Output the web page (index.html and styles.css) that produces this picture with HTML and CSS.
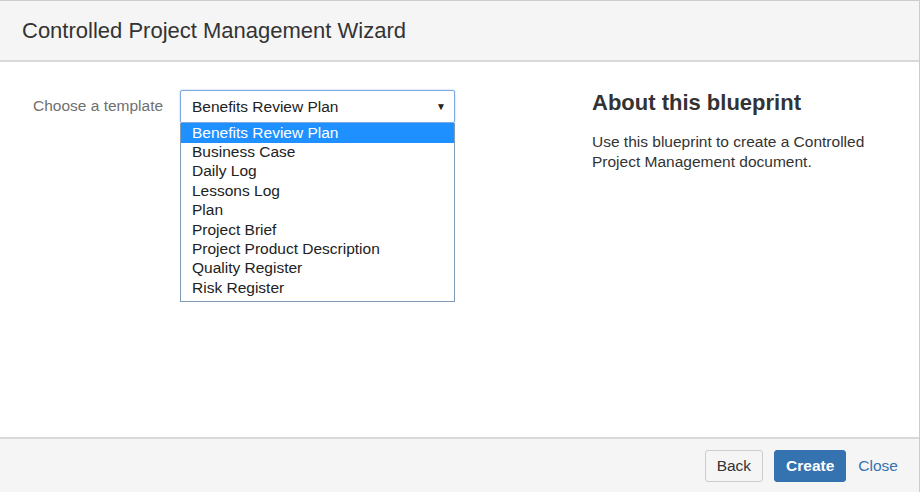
FILE: index.html
```html
<!DOCTYPE html>
<html>
<head>
<meta charset="utf-8">
<link rel="stylesheet" href="styles.css">
</head>
<body>
<div class="dialog">
  <div class="header">
    <h2 class="title">Controlled Project Management Wizard</h2>
  </div>
  <div class="content">
    <div class="form">
      <label class="label">Choose a template</label>
      <div class="select-wrap">
        <div class="select">
          <span>Benefits Review Plan</span>
          <span class="arrow">&#9660;</span>
        </div>
        <ul class="options">
          <li class="selected">Benefits Review Plan</li>
          <li>Business Case</li>
          <li>Daily Log</li>
          <li>Lessons Log</li>
          <li>Plan</li>
          <li>Project Brief</li>
          <li>Project Product Description</li>
          <li>Quality Register</li>
          <li>Risk Register</li>
        </ul>
      </div>
    </div>
    <div class="about">
      <h3>About this blueprint</h3>
      <p>Use this blueprint to create a Controlled Project Management document.</p>
    </div>
  </div>
  <div class="footer">
    <button class="btn">Back</button>
    <button class="btn primary">Create</button>
    <a class="link" href="#">Close</a>
  </div>
</div>
</body>
</html>
```
FILE: styles.css
```css
html, body {
  margin: 0;
  padding: 0;
  background: #fff;
}
body {
  font-family: "Liberation Sans", Arial, sans-serif;
  color: #333;
  width: 920px;
  height: 492px;
  overflow: hidden;
}
.dialog {
  display: flex;
  flex-direction: column;
  height: 492px;
  border-top: 1px solid #cccccc;
  border-right: 1px solid #cccccc;
  box-sizing: border-box;
}
.header {
  background: #f5f5f5;
  border-bottom: 2px solid #d9d9d9;
  height: 59px;
  display: flex;
  align-items: center;
  padding-left: 22px;
}
.title {
  margin: 0;
  font-size: 22px;
  font-weight: normal;
  color: #333;
}
.content {
  flex: 1;
  display: flex;
  padding: 28px 0 0 33px;
}
.form {
  display: flex;
  width: 559px;
}
.label {
  font-size: 15.5px;
  color: #707070;
  width: 147px;
  padding-top: 7px;
}
.select-wrap {
  position: relative;
  width: 275px;
}
.select {
  height: 33px;
  box-sizing: border-box;
  border: 1px solid #7fa8e0;
  border-radius: 2px;
  box-shadow: 0 0 2px rgba(102, 150, 233, 0.6);
  display: flex;
  align-items: center;
  justify-content: space-between;
  padding: 0 8px 0 11px;
  font-size: 15.5px;
  color: #222;
}
.arrow {
  font-size: 10px;
  color: #222;
}
.options {
  position: absolute;
  top: 33px;
  left: 0;
  width: 275px;
  box-sizing: border-box;
  margin: 0;
  padding: 0 0 3px 0;
  list-style: none;
  border: 1px solid #7f9db9;
  border-top: none;
  background: #fff;
  font-size: 15.5px;
  color: #222;
}
.options li {
  height: 19.4px;
  line-height: 18.6px;
  padding-left: 11px;
}
.options li.selected {
  background: #1e90ff;
  color: #fff;
  height: 20px;
  line-height: 20px;
}
.about h3 {
  margin: 0;
  font-size: 22px;
  font-weight: bold;
  color: #333;
}
.about p {
  margin: 16px 0 0 0;
  font-size: 15.5px;
  line-height: 20px;
  color: #333;
  width: 300px;
}
.footer {
  background: #f5f5f5;
  border-top: 2px solid #d9d9d9;
  height: 53px;
  display: flex;
  align-items: center;
  justify-content: flex-end;
  padding-right: 21px;
}
.btn {
  font-family: "Liberation Sans", Arial, sans-serif;
  font-size: 15.5px;
  height: 32px;
  padding: 0 11px;
  border: 1px solid #cccccc;
  border-radius: 3px;
  background: #f5f5f5;
  color: #333;
  margin-right: 11px;
}
.btn.primary {
  background: #3572b0;
  border-color: #3572b0;
  color: #fff;
  font-weight: bold;
}
.link {
  color: #3572b0;
  text-decoration: none;
  font-size: 15.5px;
  margin-left: 1px;
}
```
